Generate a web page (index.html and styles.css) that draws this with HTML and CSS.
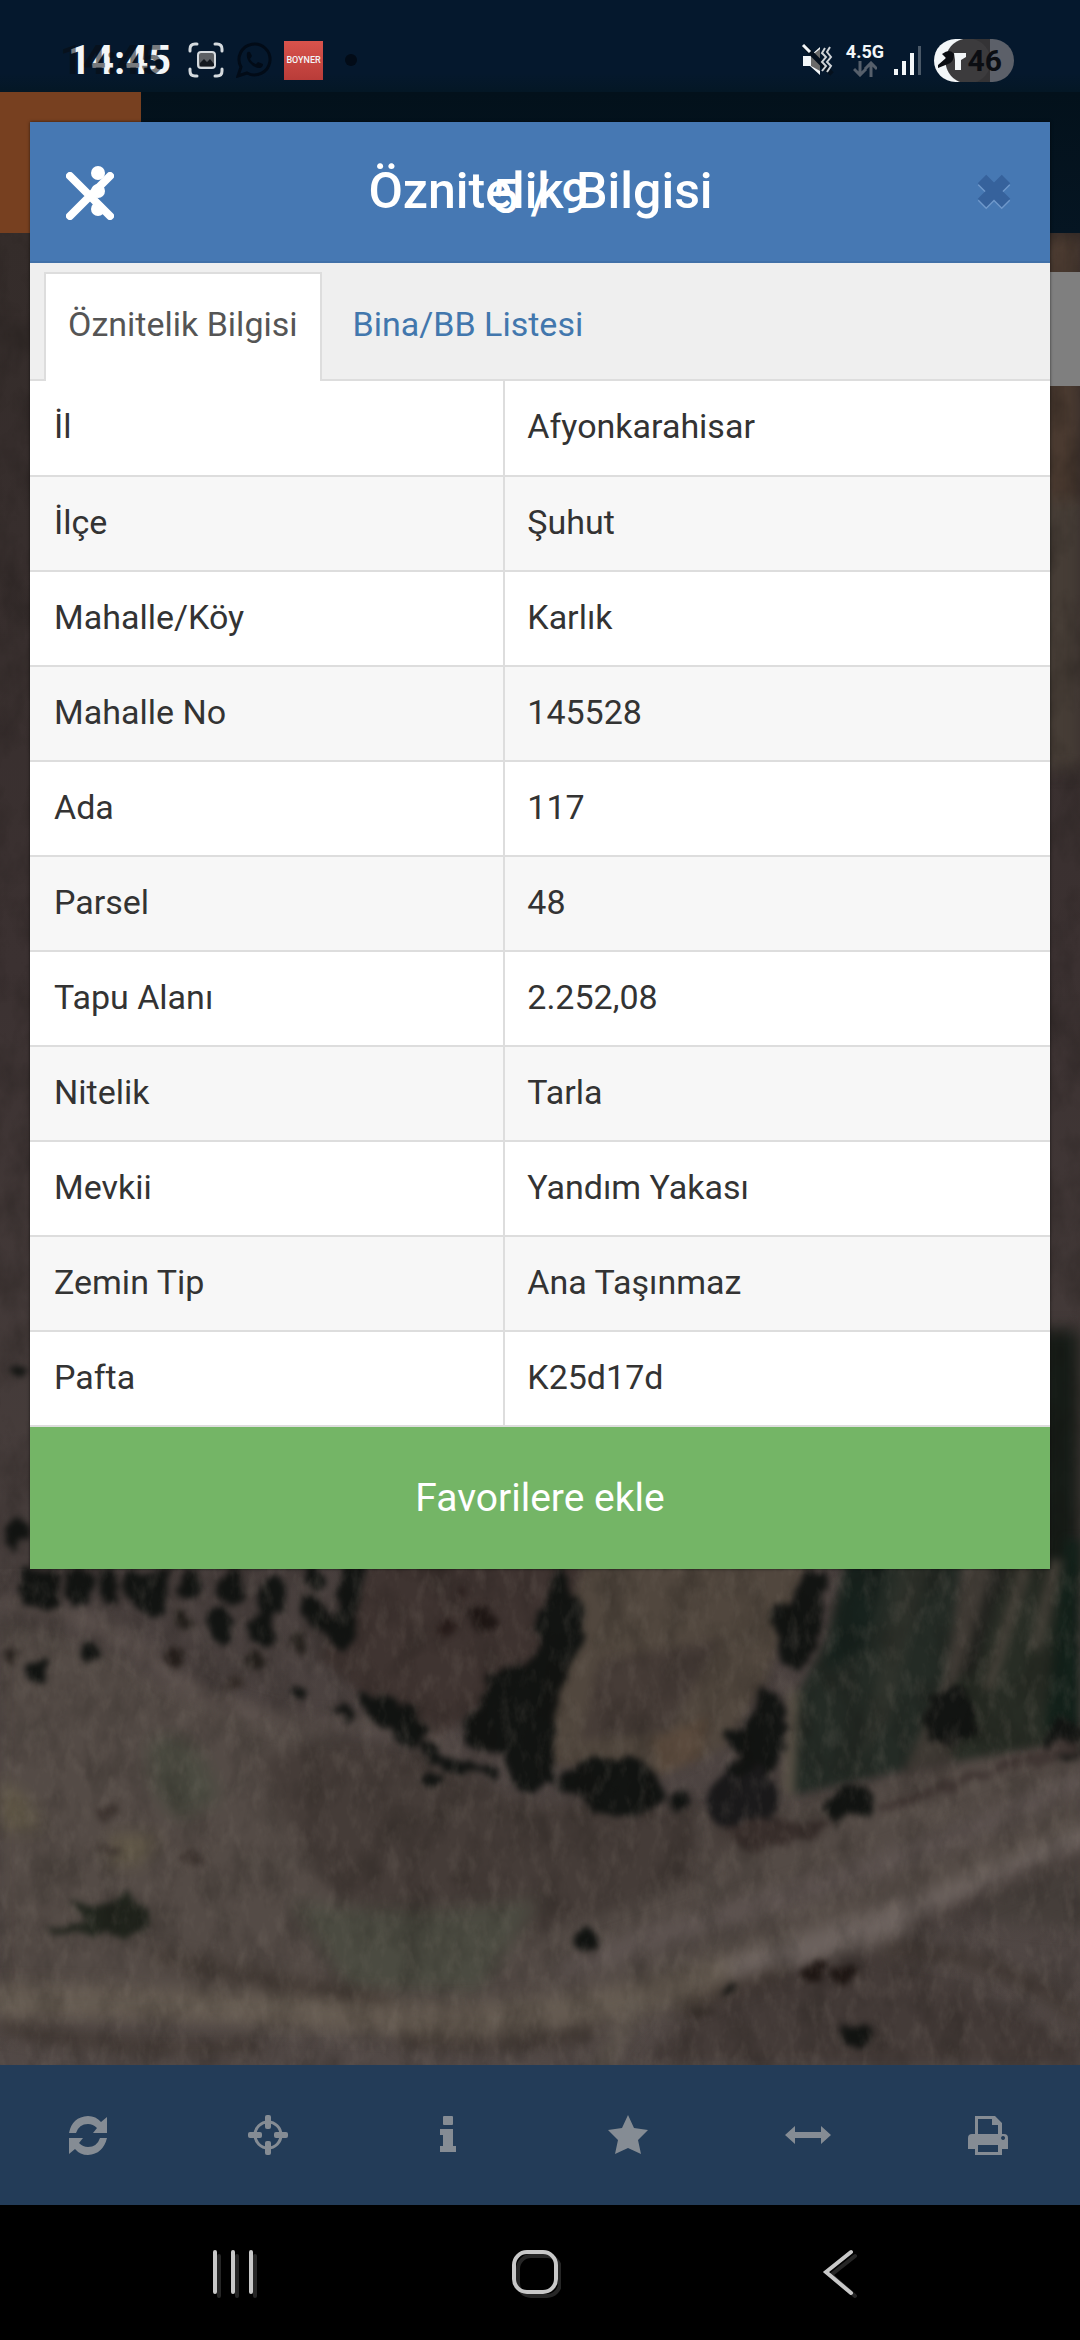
FILE: index.html
```
<!DOCTYPE html>
<html lang="tr">

<head>
    <meta charset="UTF-8">
    <meta name="viewport" content="width=device-width, initial-scale=1.0">
    <title>Öznitelik Bilgisi</title>
    <link rel="stylesheet" href="styles.css">
</head>

<body>
    <div class="screen">

        <!-- Status bar -->
        <div class="status-bar">
            <div class="status-left">
                <span class="clock">14:45</span>
                <svg class="status-icon" viewBox="0 0 36 36" fill="none" stroke="#d5dade" stroke-width="3" stroke-linecap="round">
                    <path d="M2 9V7q0-5 5-5h2M27 2h2q5 0 5 5v2M34 27v2q0 5-5 5h-2M9 34H7q-5 0-5-5v-2" />
                    <rect x="10" y="10" width="17" height="16" rx="3" fill="#5d6064" stroke-width="2" />
                    <path d="M12 24v-3l4-4 3 3 3-3 4 5v2z" fill="#15191f" stroke="none" />
                </svg>
                <svg class="status-icon" viewBox="0 0 36 36" fill="none" stroke="#020b17" stroke-width="3">
                    <path d="M2 34l3-9a15.500 15.500 0 1 1 6 6z" />
                    <path d="M11 11q1-2 3-1l2 4-2 3q2 4 6 5l2-2 5 2q0 3-3 4-6 0-10-5-4-4-3-10z" fill="#020b17" stroke="none" />
                </svg>
                <span class="brand">BOYNER</span>
                <span class="more-dot"></span>
            </div>
            <div class="status-right">
                <svg class="status-icon" viewBox="0 0 36 36">
                    <path d="M3 14h7l10-9v28l-10-9H3z" fill="#f3f6f8" />
                    <path d="M11 14l9-7v22l-9-5z" fill="#6b6a69" />
                    <path d="M4 4l28 28" stroke="#05101d" stroke-width="5" />
                    <path d="M3 3l7 7" stroke="#f3f6f8" stroke-width="3" />
                    <path d="M25 6l-3 5 4 4-4 5 4 4-4 5M30 5l-3 5 4 5-4 5 4 4-4 6" fill="none" stroke="#cfd3d7" stroke-width="2" />
                </svg>
                <span class="network">
                    <span>4.5G</span>
                    <svg viewBox="0 0 24 16" width="24" height="16" fill="none" stroke="#565f6b" stroke-width="3">
                        <path d="M7 0v14M1 8l6 6 6-6M18 16V2M12 8l6-6 6 6" />
                    </svg>
                </span>
                <svg class="signal" viewBox="0 0 30 32">
                    <path d="M0 25h4v6H0zM8 17h4v14H8zM16 9h4v22h-4z" fill="#f3f6f8" />
                    <path d="M24 2h3v29h-3z" fill="#4a5867" />
                </svg>
                <span class="battery">
                    <svg viewBox="0 0 30 24" width="30" height="24">
                        <path d="M16 5h12v4l-5 3v10h-6V12z" fill="#f3f6f8" />
                        <path d="M4 6q8-6 12 0 0 8-6 10l-10 4v-3l8-7z" fill="#0b0d12" />
                    </svg>
                    <span>46</span>
                </span>
            </div>
        </div>

        <!-- App bar behind the dialog -->
        <div class="app-bar">
            <div class="app-menu"></div>
        </div>

        <!-- Satellite map -->
        <div class="map">
            <svg class="map-image" viewBox="0 233 1080 1832" preserveAspectRatio="xMidYMax slice" color-interpolation-filters="sRGB">
                <defs>
                    <linearGradient id="ground" x1="0" y1="0" x2="0" y2="1">
                        <stop offset="0" stop-color="#342c2a" />
                        <stop offset="0.4" stop-color="#3b3131" />
                        <stop offset="0.72" stop-color="#483f3d" />
                        <stop offset="1" stop-color="#524946" />
                    </linearGradient>
                    <filter id="rough" x="-10%" y="-10%" width="120%" height="120%">
                        <feTurbulence type="fractalNoise" baseFrequency="0.06" numOctaves="3" seed="4" result="n" />
                        <feDisplacementMap in="SourceGraphic" in2="n" scale="18" xChannelSelector="R" yChannelSelector="G" />
                        <feGaussianBlur stdDeviation="3" />
                    </filter>
                    <filter id="fields" x="-10%" y="-10%" width="120%" height="120%">
                        <feGaussianBlur stdDeviation="5" />
                    </filter>
                    <filter id="soft" x="-10%" y="-10%" width="120%" height="120%">
                        <feGaussianBlur stdDeviation="8" />
                    </filter>
                    <filter id="grain" x="0" y="0" width="100%" height="100%">
                        <feTurbulence type="fractalNoise" baseFrequency="0.03 0.02" numOctaves="5" seed="9" />
                        <feColorMatrix values="0 0 0 0 0.06  0 0 0 0 0.05  0 0 0 0 0.04  2 0 0 0 -0.8" />
                    </filter>
                    <filter id="dust" x="0" y="0" width="100%" height="100%">
                        <feTurbulence type="fractalNoise" baseFrequency="0.08 0.04" numOctaves="4" seed="21" />
                        <feColorMatrix values="0 0 0 0 0.55  0 0 0 0 0.51  0 0 0 0 0.47  1.6 0 0 0 -0.75" />
                    </filter>
                </defs>
                <rect x="0" y="233" width="1080" height="1832" fill="url(#ground)" />
                <g filter="url(#soft)">
                    <path d="M1040 233h40v330h-40z" fill="#4a3a30" />
                    <path d="M1040 500h40v270h-40z" fill="#463d36" />
                    <path d="M1040 1330h40v250h-40z" fill="#161c17" />
                    <path d="M0 1620q110 20 150 60l200 60q100 40 180 60l230 10 320-80v120l-400 170H0z" fill="#544b46" />
                    <path d="M260 1760q100-50 260 40l240 10-60 70-180 60-180-40q-60-70-80-140z" fill="#453c38" />
                    <path d="M150 1740q50-20 70 60l-40 20q-40-30-30-80zM290 1900q100 20 250 0l-60 90H350z" fill="#4b4b41" />
                    <path d="M0 1780q40 20 40 50H0zM110 1835h50l-20 30h-30z" fill="#635a49" />
                    <path d="M700 2000q100-60 180-50l200 90v25H640z" fill="#443b38" />
                    <path d="M970 1890l110-40v80l-90-10z" fill="#453e3a" />
                </g>

                <!-- Fields -->
                <g filter="url(#fields)">
                    <path d="M372 1560h213l-45 140-58 5-52 40-68-50-42-38z" fill="#3f3431" />
                    <path d="M585 1560h225l-43 118-41 69-66 30-120-14 10-90z" fill="#51473e" />
                    <path d="M600 1660l120-20-50 90-90 10z" fill="#463c37" />
                    <path d="M650 1740l60-24-10 44-40 12z" fill="#5a4a3d" />
                    <path d="M850 1540h115l-22 160-38 70-110 25v-95l31-60z" fill="#242b25" />
                    <path d="M850 1560h35l-20 90-40 20z" fill="#17221d" />
                    <path d="M900 1560h30l-40 160-30 40z" fill="#2e322b" />
                    <path d="M965 1560h50l-62 130 0 70-50 12 40-90z" fill="#413c36" />
                    <path d="M1015 1560h65v172l-24 12-103 18v-74z" fill="#282d25" />
                    <path d="M1065 1540h15v190h-35z" fill="#13211a" />
                    <path d="M1020 1560l14 0-40 130-12 0z" fill="#454139" />
                    <path d="M995 1560h15l-35 110-16 10z" fill="#22231f" />
                    <path d="M1050 1560l14 0-24 90-10 0z" fill="#454139" />
                    <path d="M788 1690l12 0-6 110-12-10z" fill="#575045" />
                </g>

                <!-- Roads -->
                <g filter="url(#soft)" fill="none">
                    <path d="M1090 1830Q960 1900 880 1925T640 1997Q500 2030 330 2015T-10 2001" stroke="#655b51" stroke-width="32" />
                    <path d="M1090 1835Q960 1900 880 1925T730 1975" stroke="#6c625e" stroke-width="30" />
                    <path d="M1090 1775Q940 1850 760 1905T560 1975" stroke="#5e5451" stroke-width="20" />
                    <path d="M640 2000l-40 70" stroke="#645b52" stroke-width="14" />
                    <path d="M0 1605q90 0 160 60t180 60 100 30" stroke="#625752" stroke-width="12" />
                    <path d="M700 1810q12 60 6 120" stroke="#5c534e" stroke-width="8" />
                    <path d="M150 1955q130 30 240 45M0 2026q100 25 260 20M400 2040q130 10 200-10M680 2010q60-30 110-40M880 1950q70 0 120 20t80 50" stroke="#3b322c" stroke-width="10" />
                    <path d="M1090 1850q-80 30-180 80" stroke="#3b322f" stroke-width="8" />
                </g>

                <!-- Trees -->
                <g filter="url(#rough)" fill="#121412">
                    <path d="M22 1570h34l4 36-12 6-24-4zM64 1572h30l-2 34-22 2zM98 1570h18l2 34-16 2zM122 1570h48l-6 44-14 4-12-14-14-6z" />
                    <ellipse cx="190" cy="1585" rx="10" ry="15" />
                    <ellipse cx="232" cy="1585" rx="13" ry="20" />
                    <ellipse cx="272" cy="1596" rx="14" ry="22" />
                    <ellipse cx="314" cy="1578" rx="9" ry="12" />
                    <path d="M342 1560h26l-12 40-4 42-14 8-38-38 4-14 14-2 18 26z" />
                    <ellipse cx="184" cy="1621" rx="9" ry="9" fill="#231f1b" />
                    <ellipse cx="220" cy="1626" rx="12" ry="20" />
                    <ellipse cx="262" cy="1628" rx="13" ry="18" />
                    <ellipse cx="256" cy="1660" rx="12" ry="7" fill="#231f1b" />
                    <ellipse cx="298" cy="1642" rx="9" ry="11" fill="#231f1b" />
                    <ellipse cx="298" cy="1692" rx="9" ry="7" />
                    <ellipse cx="176" cy="1657" rx="9" ry="9" fill="#261f1c" />
                    <ellipse cx="89" cy="1654" rx="10" ry="9" />
                    <ellipse cx="37" cy="1670" rx="12" ry="11" />
                    <ellipse cx="13" cy="1657" rx="6" ry="6" fill="#2a2420" />
                    <ellipse cx="236" cy="1684" rx="9" ry="4" fill="#332b27" />
                    <ellipse cx="482" cy="1618" rx="13" ry="13" fill="#1f1715" />
                    <ellipse cx="446" cy="1628" rx="8" ry="11" fill="#2a1e1c" />
                    <ellipse cx="460" cy="1592" rx="5" ry="6" fill="#2a1e1c" />
                    <path d="M362 1692l28 6 22 12 16 22-14 16-38-22-14-20z" />
                    <path d="M340 1700l14 16-4 6-16-14zM420 1740l30 18 46 10-2 10-64-14z" />
                    <ellipse cx="435" cy="1779" rx="9" ry="8" />
                    <path d="M540 1610l22-50 8 30 16 20-6 40-22 40-6 90-20 14-20-10-8-30-36-8-4-26 16-14 6-28 30-12 26-16-6-20z" />
                    <path d="M556 1776l30-18 44-2 26 18 8 28-38 18-34-10-6-14-30-10z" />
                    <ellipse cx="680" cy="1800" rx="9" ry="9" />
                    <path d="M806 1570h22l-8 40-4 40-18 26-16-14-12-56 22-6zM766 1686l20 20-4 54-20 30-30-10-4-12 14-10-14-14-4-12 26-14z" />
                    <path d="M700 1800l24-26 40-6 16 24-16 34-40 4-20-16z" fill="#1b1a1b" />
                    <path d="M824 1800l20-14 20-2 12 14-6 20-24-6-14 14z" />
                    <path d="M930 1695l24-10 20 16 2 30-22 16-22-6-6-20z" />
                    <ellipse cx="1066" cy="1742" rx="20" ry="22" />
                    <path d="M720 1825l50-6 60 6-20 16-60 10z" fill="#392f2c" />
                    <path d="M876 1806l204-70v18l-100 24-90 36z" fill="#403633" />
                    <ellipse cx="587" cy="1940" rx="11" ry="11" />
                    <ellipse cx="815" cy="1971" rx="12" ry="10" fill="#201815" />
                    <ellipse cx="843" cy="1973" rx="11" ry="10" fill="#201815" />
                    <ellipse cx="860" cy="2034" rx="16" ry="13" />
                    <ellipse cx="729" cy="1989" rx="6" ry="7" />
                    <path d="M686 2006l34 6-20 6z" fill="#332c27" />
                    <path d="M70 1900l30 8 24-12 20 10 10 22-30 8-78-4v-4l42-6z" fill="#22261e" />
                    <path d="M95 1810l20-6 4 10-20 8zM180 1855l16-6 10 12-16 6zM90 1845l30 4-10 8z" fill="#3d3430" />
                    <ellipse cx="16" cy="1372" rx="10" ry="7" />
                    <ellipse cx="16" cy="1534" rx="11" ry="16" />
                </g>
                <rect x="0" y="233" width="1080" height="1832" filter="url(#grain)" opacity="0.250" />
                <rect x="0" y="1569" width="1080" height="496" filter="url(#dust)" opacity="0.250" />
            </svg>
            <div class="map-search"></div>
        </div>

        <!-- Map toolbar -->
        <div class="toolbar">
            <button type="button" aria-label="Yenile">
                <svg viewBox="0 0 40 40">
                    <path d="M1 18Q4 2 20 1q8 0 13 6l6-5v16H25l4-5q-4-4-9-4-9 0-12 9z" />
                    <path d="M39 23q-4 16-19 17-8 0-13-6l-6 5V23h14l-4 5q4 4 9 4 9 0 12-9z" />
                </svg>
            </button>
            <button type="button" aria-label="Konum">
                <svg viewBox="0 0 40 40">
                    <circle cx="20" cy="20" r="13" fill="none" stroke="#858c94" stroke-width="3" />
                    <rect x="17" y="0" width="6" height="14" rx="2" />
                    <rect x="17" y="26" width="6" height="14" rx="2" />
                    <rect x="0" y="17" width="14" height="6" rx="2" />
                    <rect x="26" y="17" width="14" height="6" rx="2" />
                </svg>
            </button>
            <button type="button" aria-label="Bilgi">
                <svg viewBox="0 0 40 40">
                    <rect x="15" y="1" width="10" height="9" rx="1" />
                    <path d="M12 14h13v17h3v6H12v-6h3V20h-3z" />
                </svg>
            </button>
            <button type="button" aria-label="Favoriler">
                <svg viewBox="0 0 40 40">
                    <path d="M20 0l6 13 14 2-10 10 3 14-13-6-13 6 3-14L0 15l14-2z" />
                </svg>
            </button>
            <button type="button" aria-label="Ölçüm">
                <svg viewBox="0 0 40 40" overflow="visible">
                    <path d="M-3 20l10-9v6h26v-6l10 9-10 9v-6H7v6z" />
                </svg>
            </button>
            <button type="button" aria-label="Yazdır">
                <svg viewBox="0 0 40 40">
                    <path fill-rule="evenodd" d="M7 1h20l7 7v11h2q4 0 4 4v11h-6v6H7v-6H0V23q0-4 4-4h3zM10 4v15h20V10h-6V4zM10 30v7h20v-7zM35 21a2 2 0 1 0 .1 0z" />
                </svg>
            </button>
        </div>

        <!-- Android navigation -->
        <div class="system-nav">
            <button type="button" aria-label="Son uygulamalar">
                <svg viewBox="0 0 52 52">
                    <path d="M12 9v40M30 9v40M48 9v40" stroke="#262626" />
                    <path d="M8 5v40M26 5v40M44 5v40" />
                </svg>
            </button>
            <button type="button" aria-label="Ana ekran">
                <svg viewBox="0 0 52 52">
                    <rect x="9" y="9" width="42" height="40" rx="13" stroke="#262626" />
                    <rect x="5" y="5" width="42" height="40" rx="13" />
                </svg>
            </button>
            <button type="button" aria-label="Geri">
                <svg viewBox="0 0 52 52">
                    <path d="M44 9L20 28l24 21" stroke="#262626" />
                    <path d="M40 5L15 25l25 21" />
                </svg>
            </button>
        </div>

        <!-- Attribute dialog -->
        <div class="modal" role="dialog" aria-labelledby="modal-title">
            <div class="modal-header">
                <button type="button" class="modal-menu" aria-label="Menü">
                    <svg viewBox="0 0 14 50" width="14" height="50">
                        <circle cx="7" cy="7" r="7" />
                        <circle cx="7" cy="25" r="7" />
                        <circle cx="7" cy="43" r="7" />
                    </svg>
                </button>
                <h2 id="modal-title">Öznitelik Bilgisi</h2>
                <button type="button" class="modal-close" aria-label="Kapat">
                    <svg viewBox="0 0 36 38" width="36" height="38">
                        <path d="M6 9l24 24M30 9L6 33" stroke="#6f98cb" />
                        <path d="M6 7l24 24M30 7L6 31" stroke="#36629c" />
                    </svg>
                </button>
            </div>
            <div class="tabs">
                <a href="#" class="tab active">Öznitelik Bilgisi</a>
                <a href="#" class="tab">Bina/BB Listesi</a>
            </div>
            <table class="attributes">
                <tr><th scope="row">İl</th><td>Afyonkarahisar</td></tr>
                <tr><th scope="row">İlçe</th><td>Şuhut</td></tr>
                <tr><th scope="row">Mahalle/Köy</th><td>Karlık</td></tr>
                <tr><th scope="row">Mahalle No</th><td>145528</td></tr>
                <tr><th scope="row">Ada</th><td>117</td></tr>
                <tr><th scope="row">Parsel</th><td>48</td></tr>
                <tr><th scope="row">Tapu Alanı</th><td>2.252,08</td></tr>
                <tr><th scope="row">Nitelik</th><td>Tarla</td></tr>
                <tr><th scope="row">Mevkii</th><td>Yandım Yakası</td></tr>
                <tr><th scope="row">Zemin Tip</th><td>Ana Taşınmaz</td></tr>
                <tr><th scope="row">Pafta</th><td>K25d17d</td></tr>
            </table>
            <button type="button" class="favorite-btn">Favorilere ekle</button>
        </div>

        <!-- Gallery controls on top of the dialog -->
        <div class="viewer-bar">
            <button type="button" class="viewer-close" aria-label="Kapat">
                <svg viewBox="0 0 48 48" width="48" height="48">
                    <path d="M4 4l40 40M44 4L4 44" />
                </svg>
            </button>
            <span class="viewer-count">5 / 9</span>
        </div>
    </div>
</body>

</html>
```
FILE: styles.css
```
* {
  box-sizing: border-box;
}
body {
  margin: 0;
  font-family: Roboto, "Liberation Sans", sans-serif;
  background-color: #000;
}
button {
  padding: 0;
  border: none;
  background: none;
  font-family: inherit;
  cursor: pointer;
}
svg {
  display: block;
}
.screen {
  position: relative;
  display: flex;
  flex-direction: column;
  min-height: 100vh;
}

/* Status bar */
.status-bar {
  display: flex;
  justify-content: space-between;
  align-items: center;
  height: 92px;
  padding: 28px 66px 0 68px;
  background: linear-gradient(#05182d 80%, #041725);
  color: #f3f6f8;
}
.status-left,
.status-right {
  display: flex;
  align-items: center;
}
.status-left {
  gap: 12px;
}
.status-right {
  gap: 10px;
}
.clock {
  position: relative;
  margin-right: 5px;
  font-size: 40px;
  font-weight: 700;
}
/* Burned-in shadow of the clock */
.clock::after {
  content: "14:45";
  position: absolute;
  left: -8px;
  top: 0;
  color: rgba(10, 12, 16, 0.55);
}
.status-icon {
  width: 36px;
  height: 36px;
}
.brand {
  width: 39px;
  height: 39px;
  background: linear-gradient(#d9534c, #b93c39);
  font-size: 9px;
  font-weight: 500;
  line-height: 39px;
  text-align: center;
}
.more-dot {
  width: 12px;
  height: 12px;
  margin-left: 10px;
  border-radius: 50%;
  background-color: #020b17;
}
.network {
  display: flex;
  flex-direction: column;
  align-items: center;
  font-size: 18px;
  font-weight: 700;
  line-height: 18px;
}
.signal {
  width: 30px;
  height: 32px;
}
.battery {
  display: flex;
  justify-content: flex-end;
  align-items: center;
  width: 80px;
  height: 43px;
  padding-right: 12px;
  border-radius: 22px;
  background: radial-gradient(circle at 34px 22px, #3c3b3d 22px, transparent 23px),
    linear-gradient(90deg, #f3f6f8 34px, #343335 34px, #343335 56px, #5c6069 56px);
  color: #0b0d12;
  font-size: 30px;
  font-weight: 700;
  line-height: 43px;
}

/* App bar */
.app-bar {
  height: 141px;
  background: linear-gradient(#03111b, #051522);
}
.app-menu {
  width: 141px;
  height: 100%;
  background-color: #774020;
}

/* Map */
.map {
  position: relative;
  flex: 1;
  overflow: hidden;
}
.map-image {
  position: absolute;
  width: 100%;
  height: 100%;
}
.map-search {
  position: relative;
  height: 114px;
  margin: 39px 0 0 141px;
  background-color: #7f7f7f;
}

/* Toolbar */
.toolbar {
  display: grid;
  grid-template-columns: repeat(6, 1fr);
  height: 140px;
  background-color: #233c58;
}
.toolbar button {
  display: flex;
  justify-content: center;
  align-items: center;
  padding-right: 5px;
}
.toolbar svg {
  width: 40px;
  height: 40px;
  fill: #858c94;
}

/* Android navigation */
.system-nav {
  display: grid;
  grid-template-columns: repeat(3, 1fr);
  height: 135px;
  padding: 0 92px 0 82px;
  background-color: #000;
}
.system-nav button {
  display: flex;
  justify-content: center;
  align-items: center;
}
.system-nav svg {
  width: 52px;
  height: 52px;
  fill: none;
  stroke: #c8c8c8;
  stroke-width: 4;
  stroke-linecap: round;
}

/* Dialog */
.modal {
  position: absolute;
  top: 122px;
  left: 30px;
  right: 30px;
  background-color: #fff;
  box-shadow: 0 0 3px rgba(0, 0, 0, 0.6);
}
.modal-header {
  display: grid;
  grid-template-columns: 1fr auto 1fr;
  align-items: center;
  height: 141px;
  padding: 0 38px 2px 61px;
  border-bottom: 2px solid #4170a8;
  background-color: #4678b3;
}
.modal-header h2 {
  margin: 0;
  padding-right: 22px;
  color: #fff;
  font-size: 50px;
  font-weight: 500;
}
.modal-menu {
  justify-self: start;
  fill: #fff;
}
.modal-close {
  justify-self: end;
  fill: none;
  stroke-width: 12;
}
.tabs {
  display: flex;
  height: 118px;
  padding: 9px 14px 0;
  border-bottom: 2px solid #ddd;
  background-color: #efefef;
}
.tab {
  height: 109px;
  padding: 2px 22px 0;
  color: #4277ad;
  font-size: 34px;
  line-height: 100px;
  text-decoration: none;
}
.tab + .tab {
  padding-left: 31px;
}
.tab.active {
  padding-top: 0;
  border: 2px solid #ddd;
  border-bottom: none;
  background-color: #fff;
  color: #555;
}
.attributes {
  width: 100%;
  border-collapse: collapse;
  color: #333;
  font-size: 34px;
}
.attributes th,
.attributes td {
  height: 95px;
  padding: 0 24px 4px;
  border-bottom: 2px solid #ddd;
  font-weight: 400;
  text-align: left;
}
.attributes th {
  width: 46.5%;
  border-right: 2px solid #ddd;
}
.attributes td {
  padding-left: 22px;
}
.attributes tr:nth-child(even) {
  background-color: #f7f7f7;
}
.favorite-btn {
  display: block;
  width: 100%;
  height: 142px;
  background-color: #74b566;
  color: #fff;
  font-size: 39px;
}

/* Gallery controls */
.viewer-bar {
  position: absolute;
  top: 166px;
  left: 0;
  right: 0;
  display: grid;
  grid-template-columns: 1fr auto 1fr;
  align-items: center;
  height: 60px;
  padding: 0 66px;
  color: #fff;
}
.viewer-close {
  justify-self: start;
  fill: none;
  stroke: #fff;
  stroke-width: 8;
  stroke-linecap: round;
}
.viewer-count {
  font-size: 48px;
  font-weight: 500;
}
```
